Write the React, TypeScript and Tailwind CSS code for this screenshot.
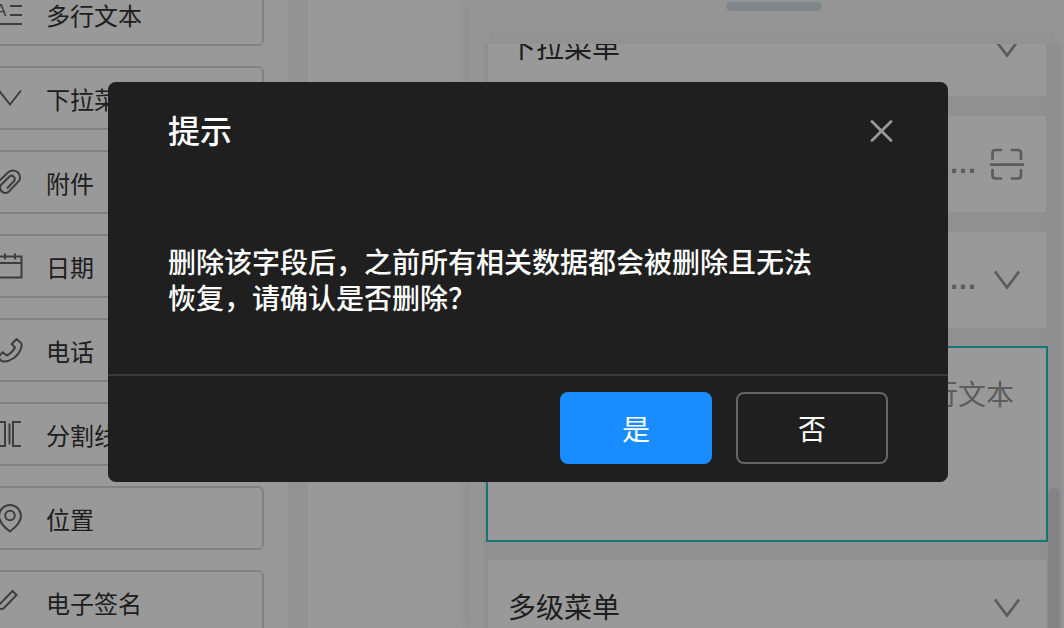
import type { ReactNode } from "react";

const fields: { label: string; icon: ReactNode }[] = [
  {
    label: "多行文本",
    icon: (
      <>
        <path d="M12 4h12M12 13h12M0 22h24" />
        <text x="-3" y="14" fontSize="17" fill="currentColor" stroke="none">
          A
        </text>
      </>
    ),
  },
  { label: "下拉菜单", icon: <path d="M1 4.5l11 14 11-14" /> },
  {
    label: "附件",
    icon: (
      <path d="M-.5 12.500L10 2.500a7 7 0 0 1 11 8.500L11 21.500a5.200 5.200 0 0 1-7.800-6.800l8.300-8.200a3.200 3.200 0 0 1 4.500 4.500l-7 7.500" />
    ),
  },
  {
    label: "日期",
    icon: <path d="M-2 2.500h25.500v21H-2M-2 9h25.500M7-.5v6M17-.5v6" />,
  },
  {
    label: "电话",
    icon: (
      <path
        strokeLinejoin="round"
        d="M18.500 1l4 3.500Q24.500 6 23 10.500 21 16 16 20 11 23.500 6 23.500q-2 0-3-1L0 19.500l4.700-5.300 4 3.300Q14 15 17 9.500L13.700 6z"
      />
    ),
  },
  {
    label: "分割线",
    icon: <path d="M0 0h7v24H0M11.500 1.500v21M23 0h-8v24h8" />,
  },
  {
    label: "位置",
    icon: (
      <>
        <path d="M12 25.500C8 22.500 1 17 1 10a11 11 0 0 1 22 0c0 7-7 12.500-11 15.500z" />
        <circle cx="12" cy="9.500" r="4.800" />
      </>
    ),
  },
  {
    label: "电子签名",
    icon: <path d="M-1 17L14.500 1l4 4L5.500 18.500l-6.500 1z" />,
  },
];

function ArrowDown() {
  return (
    <svg className="w-9 h-9 shrink-0 text-[#999]" viewBox="0 0 36 36" fill="none" stroke="currentColor" strokeWidth="2.800">
      <path d="M6 9.500l12 16 12-16" />
    </svg>
  );
}

function ScanIcon() {
  return (
    <svg className="w-9 h-9 shrink-0 text-[#999]" viewBox="0 0 36 36" fill="none" stroke="currentColor" strokeWidth="2.700" strokeLinecap="round">
      <path d="M3.500 13V7q0-3 3-3H12M23 4h6q3 0 3 3v6M3.500 24v5.500q0 3 3 3H12M23 32.500h6q3 0 3-3V24M2 18.600h32" />
    </svg>
  );
}

function FieldCard({ label, hint, icon }: { label?: string; hint?: string; icon: ReactNode }) {
  return (
    <div className="flex items-center h-24 shrink-0 bg-white pl-5 pr-[21px]">
      <span className="flex-1 pt-0.5 text-[28px]">{label}</span>
      {hint && <span className="mr-3 text-[28px] font-bold text-[#999]">{hint}</span>}
      {icon}
    </div>
  );
}

export default function App() {
  return (
    <div className="h-screen overflow-hidden flex bg-white text-[#333] font-['Liberation_Sans','Noto_Sans_CJK_SC',sans-serif]">
      <aside className="w-72 shrink-0 pr-6">
        <div className="flex flex-col gap-5 -mt-[18px] -ml-6">
          {fields.map((field) => (
            <button key={field.label} className="flex items-center gap-6 h-16 shrink-0 pl-5 border-2 border-[#d9d9d9] rounded-md">
              <svg className="w-6 h-6 shrink-0 overflow-visible text-[#666]" viewBox="0 0 24 24" fill="none" stroke="currentColor" strokeWidth="2">
                {field.icon}
              </svg>
              <span className="pt-1.5 text-2xl">{field.label}</span>
            </button>
          ))}
        </div>
      </aside>
      <div className="w-5 shrink-0 bg-[#f3f3f3]" />
      <main className="flex-1" />

      {/* phone preview */}
      <section className="w-[595px] shrink-0 flex flex-col bg-[#f9f9f9] shadow-[0_0_16px_rgba(0,0,0,0.12)]">
        <div className="w-[610px] h-[31px] shrink-0 pt-0.5 flex justify-center">
          <div className="w-24 h-[9px] rounded-full bg-[#d4e1e6]" />
        </div>
        <div className="h-[13px] shrink-0 ml-[19px] mr-2 bg-[#f4f4f4] border border-b-0 border-[#f7f7f7]" />
        <div className="flex-1 min-h-0 overflow-hidden flex ml-[15px] mr-0.5 bg-[#f1f1f1]">
          <div className="flex-1 flex flex-col gap-5 -mt-11 pl-1">
            <FieldCard label="下拉菜单" icon={<ArrowDown />} />
            <FieldCard hint="…" icon={<ScanIcon />} />
            <FieldCard hint="…" icon={<ArrowDown />} />
            <div className="relative z-10 h-48 shrink-0 flex bg-white outline-2 outline-[#20c4c1]">
              <textarea
                aria-label="多行文本"
                placeholder="多行文本"
                className="w-full resize-none outline-none px-8 pt-7 text-right text-[28px] leading-10 placeholder:text-[#999]"
              />
            </div>
            <FieldCard label="多级菜单" icon={<ArrowDown />} />
          </div>
          <div className="w-4 shrink-0 pl-0.5 pt-[444px] bg-[#eee]">
            <div className="w-3 h-full rounded-t-full bg-[#dadce0]" />
          </div>
        </div>
      </section>

      <div className="fixed inset-0 z-20 flex items-start justify-center pt-[82px] pr-2 bg-black/40">
        <div role="dialog" aria-modal="true" aria-labelledby="dialog-title" className="w-[840px] max-w-full rounded-lg bg-[#1f1f1f] text-white">
          <div className="flex items-center justify-between pt-7 pl-[60px] pr-[54px]">
            <h2 id="dialog-title" className="text-[32px] leading-[44px] font-medium">提示</h2>
            <button aria-label="关闭" className="text-[#999]">
              <svg className="w-6 h-6" viewBox="0 0 24 24" fill="none" stroke="currentColor" strokeWidth="2.800" strokeLinecap="round">
                <path d="M2 1.500l19 19M21 1.500l-19 19" />
              </svg>
            </button>
          </div>
          <p className="px-[60px] pt-[92px] pb-14 text-[28px] leading-9 font-medium">
            删除该字段后，之前所有相关数据都会被删除且无法
            <br />
            恢复，请确认是否删除？
          </p>
          <div className="flex justify-end gap-6 border-t-2 border-[#3a3a3a] px-[60px] pt-4 pb-[18px] text-[28px]">
            <button className="w-[152px] h-[72px] pt-1.5 rounded-lg bg-[#198cff]">是</button>
            <button className="w-[152px] h-[72px] pt-1.5 rounded-lg border-2 border-[#666]">否</button>
          </div>
        </div>
      </div>
    </div>
  );
}
